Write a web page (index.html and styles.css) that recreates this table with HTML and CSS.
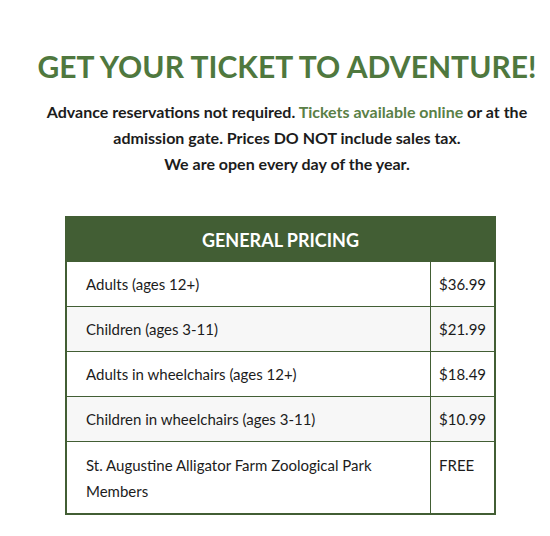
FILE: index.html
```html
<!DOCTYPE html>
<html>
<head>
<meta charset="utf-8">
<link rel="stylesheet" href="styles.css">
</head>
<body>
<div class="page">
  <section class="intro">
    <h1 class="title">GET YOUR TICKET TO ADVENTURE!</h1>
    <p class="lead">Advance reservations not required. <a class="link" href="#">Tickets available online</a> or at the admission gate. Prices DO NOT include sales tax.<br>We are open every day of the year.</p>
  </section>
  <table class="pricing">
    <thead>
      <tr><th colspan="2" class="head">GENERAL PRICING</th></tr>
    </thead>
    <tbody>
      <tr><td class="label">Adults (ages 12+)</td><td class="price">$36.99</td></tr>
      <tr class="alt"><td class="label">Children (ages 3-11)</td><td class="price">$21.99</td></tr>
      <tr><td class="label">Adults in wheelchairs (ages 12+)</td><td class="price">$18.49</td></tr>
      <tr class="alt"><td class="label">Children in wheelchairs (ages 3-11)</td><td class="price">$10.99</td></tr>
      <tr class="tall"><td class="label">St. Augustine Alligator Farm Zoological Park Members</td><td class="price">FREE</td></tr>
    </tbody>
  </table>
</div>
</body>
</html>
```
FILE: styles.css
```css
html, body {
  margin: 0;
  padding: 0;
  background: #ffffff;
  overflow: hidden;
}
body {
  font-family: Lato, "Open Sans", sans-serif;
  color: #1c1c1c;
}
.page {
  padding-top: 46px;
}
.intro {
  width: 574px;
  text-align: center;
}
.title {
  margin: 0;
  font-size: 30px;
  line-height: 40px;
  font-weight: 700;
  color: #4f783e;
  letter-spacing: 0.05px;
}
.lead {
  margin: 13px auto 0;
  max-width: 492px;
  font-size: 16px;
  line-height: 26px;
  font-weight: 700;
}
.link {
  color: #5a8046;
  text-decoration: none;
}
.pricing {
  margin: 39px 0 0 65px;
  width: 431px;
  border-collapse: collapse;
  border: 2px solid #425e34;
  font-size: 15px;
}
.head {
  background: #425e34;
  color: #ffffff;
  font-size: 18px;
  font-weight: 700;
  height: 43px;
  padding: 0;
  text-align: center;
}
.pricing td {
  border: 1px solid #425e34;
  height: 44px;
  padding: 0;
  vertical-align: middle;
  line-height: 26px;
}
.label {
  padding-left: 19px !important;
  width: 344px;
}
.price {
  padding-left: 8px !important;
}
.alt td {
  background: #f7f7f7;
}
.tall td {
  vertical-align: top;
  padding-top: 10px !important;
  padding-bottom: 9px !important;
}
```
